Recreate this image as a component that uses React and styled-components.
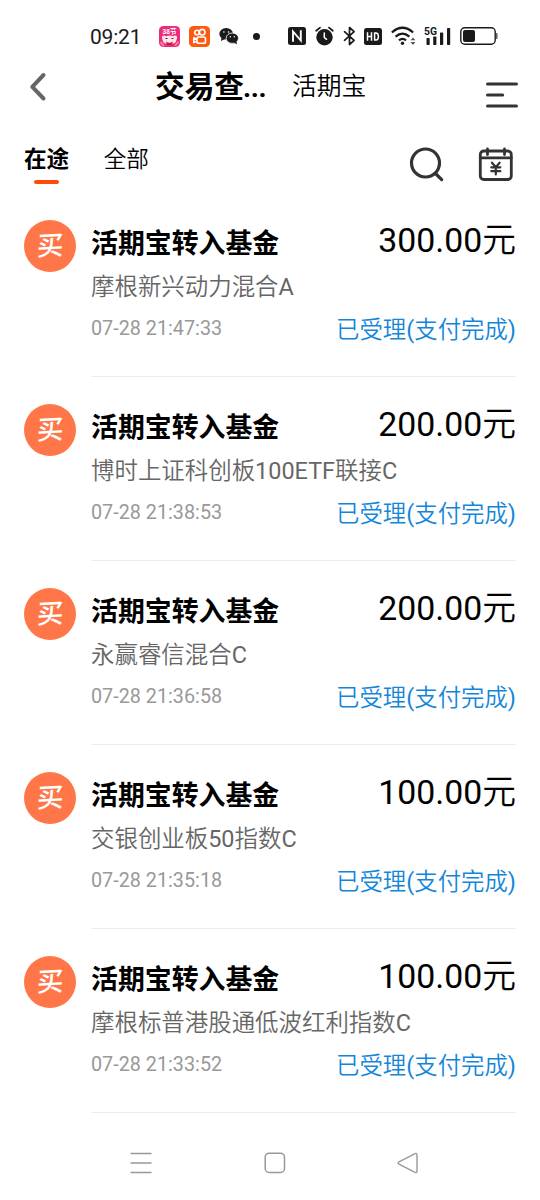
import styled, { createGlobalStyle } from "styled-components";

const GlobalStyle = createGlobalStyle`
    * {
        box-sizing: border-box;
    }

    body {
        margin: 0;
        background: #fff;
        font-family: Roboto, "Noto Sans CJK SC", sans-serif;
        color: #000;
    }

    svg {
        display: block;
        flex-shrink: 0;
        overflow: visible;
    }
`;

const Screen = styled.div`
    width: 540px;
    height: 1200px;
    display: flex;
    flex-direction: column;
    overflow: hidden;
`;

const StatusBar = styled.div`
    height: 60px;
    padding: 12px 42px 0 90px;
    display: flex;
    align-items: center;
    justify-content: space-between;
    color: #1a1a1a;
`;

const StatusGroup = styled.div`
    display: flex;
    align-items: center;
    gap: ${props => props.$gap}px;
`;

const Clock = styled.span`
    width: 60px;
    padding-top: 2px;
    font-size: 21px;
    line-height: 26px;
    letter-spacing: -0.2px;
    white-space: nowrap;
`;

const Dot = styled.span`
    width: 7px;
    height: 7px;
    margin-left: 5px;
    border-radius: 50%;
    background: #1a1a1a;
`;

const Header = styled.header`
    height: 64px;
    padding: 0 22px 0 29px;
    display: flex;
    align-items: flex-start;

    .back {
        margin-top: 12px;
    }

    .menu {
        margin: 20px 0 0 auto;
    }
`;

const PageTitle = styled.h1`
    width: 113px;
    margin: 5px 0 0 108px;
    font-size: 29.7px;
    line-height: 44px;
    font-weight: 700;
    white-space: nowrap;

    span {
        margin-left: -1px;
        font-size: 28px;
        letter-spacing: -0.4px;
    }
`;

const Account = styled.span`
    margin: 9px 0 0 24px;
    font-size: 24.8px;
    line-height: 36px;
    font-weight: 350;
`;

const Toolbar = styled.div`
    height: 69px;
    padding: 0 27px 0 24px;
    display: flex;
    align-items: flex-start;

    .search {
        margin: 23px 34px 0 auto;
    }

    .calendar {
        margin-top: 22px;
    }
`;

const Tab = styled.div`
    margin: 19px 34.5px 0 0;
    display: flex;
    flex-direction: column;
    align-items: center;
    font-size: 22.6px;
    line-height: 34px;
    font-weight: ${props => props.$active ? 700 : 350};

    &::after {
        content: "";
        width: 25px;
        height: 4px;
        margin-top: 3px;
        border-radius: 2px;
        background: ${props => props.$active ? "#ff4a0a" : "transparent"};
    }
`;

const List = styled.div`
    flex: 1;
`;

const Row = styled.div`
    height: 184px;
    padding: 27px 24px 0;
    display: flex;
    gap: 15px;
`;

const Badge = styled.div`
    width: 52px;
    height: 52px;
    border-radius: 50%;
    display: flex;
    align-items: center;
    justify-content: center;
    flex-shrink: 0;
    background: #ff7748;
    color: #fff;

    span {
        font-size: 26.5px;
        line-height: 52px;
        font-weight: 500;
        transform: skewX(-4deg) rotate(-3deg);
    }
`;

const Details = styled.div`
    flex: 1;
    display: flex;
    flex-direction: column;
    border-bottom: 1px solid #ededed;
`;

const Line = styled.div`
    display: flex;
    align-items: center;
    justify-content: space-between;
    height: ${props => props.$height}px;
    white-space: nowrap;
`;

const Kind = styled.span`
    margin-top: 2px;
    font-size: 26.9px;
    line-height: 40px;
    font-weight: 700;
`;

// Chinese is set a little lighter than the latin letters and digits
const Mixed = styled.span`
    font-weight: 350;

    i {
        font-style: normal;
        font-weight: 400;
    }
`;

const Amount = styled(Mixed)`
    margin-top: -5px;
    font-size: 33.8px;
    line-height: 44px;
`;

const Fund = styled(Mixed)`
    font-size: 23.45px;
    line-height: 36px;
    color: #666;
`;

const Time = styled.span`
    font-size: 19.8px;
    line-height: 30px;
    color: #999;
`;

const Status = styled(Mixed)`
    margin-top: 1px;
    font-size: 23.4px;
    line-height: 36px;
    color: #1486d9;
`;

const NavBar = styled.nav`
    height: 87px;
    padding: 12px 121px 0 130px;
    display: flex;
    align-items: center;
    justify-content: space-between;
    color: #999;
`;

const orders = [
    { fund: "摩根新兴动力混合A", time: "07-28 21:47:33", amount: "300.00元" },
    { fund: "博时上证科创板100ETF联接C", time: "07-28 21:38:53", amount: "200.00元" },
    { fund: "永赢睿信混合C", time: "07-28 21:36:58", amount: "200.00元" },
    { fund: "交银创业板50指数C", time: "07-28 21:35:18", amount: "100.00元" },
    { fund: "摩根标普港股通低波红利指数C", time: "07-28 21:33:52", amount: "100.00元" },
];

// wraps the latin runs of a text
const mix = text => text.split(/([\x20-\x7e]+)/).map((part, i) => (
    i % 2 ? <i key={i}>{part}</i> : part
));

const ShopIcon = () => (
    <svg width="21" height="21" viewBox="0 0 21 21">
        <rect width="21" height="21" rx="4.5" fill="#ee2a7b" />
        <path d="M3 12.5q-.5-3 2-3l2 .8q3.5-1.6 7 0l2-.8q2.5 0 2 3l-1.5 4q-6 4-12 0z" fill="#fbe6e8" />
        <path d="M7 15.5q3.5 2.4 7 0l-.8 3.5H7.8z" fill="#c9184a" />
        <path d="M6.5 12.5h2M12.5 12.5h2" stroke="#6b1730" strokeWidth="1.2" />
        <path d="M1.5 16l3.5 4M19.5 15.5L16 20" stroke="#ff7c9c" strokeWidth="2" />
        <text x="10.5" y="8" textAnchor="middle" fontSize="6.5" fontWeight="700" fill="#fff">38节</text>
    </svg>
);

const VideoIcon = () => (
    <svg width="21" height="21" viewBox="0 0 21 21" fill="none" stroke="#fff" strokeWidth="1.6">
        <rect width="21" height="21" rx="4.5" fill="#fb5a10" stroke="none" />
        <circle cx="8" cy="6.5" r="2.3" />
        <circle cx="13.2" cy="6.2" r="2.8" />
        <rect x="8" y="11" width="8.5" height="6.3" rx="1.8" />
        <path d="M8 13.2l-3.2-1.4v4.8L8 15.2" strokeLinejoin="round" />
    </svg>
);

const WechatIcon = () => (
    <svg width="20" height="18" viewBox="0 0 20 18" fill="#1a1a1a">
        <ellipse cx="7.2" cy="6.8" rx="6.9" ry="5.8" />
        <path d="M2.5 10.5L2 14l3.5-1.7z" />
        <ellipse cx="13.3" cy="11.2" rx="6.2" ry="5.2" stroke="#fff" strokeWidth=".8" />
        <path d="M15 15.8l3 1.5-.6-3z" />
        <circle cx="4.9" cy="5" r=".8" fill="#fff" />
        <circle cx="9.5" cy="5" r=".8" fill="#fff" />
        <circle cx="11.3" cy="9.8" r=".7" fill="#fff" />
        <circle cx="15.3" cy="9.8" r=".7" fill="#fff" />
    </svg>
);

const NfcIcon = () => (
    <svg width="18" height="18" viewBox="0 0 18 18">
        <rect width="18" height="18" rx="2.5" fill="#1a1a1a" />
        <path d="M5 14.8V4.5l7.8 9V3.2" fill="none" stroke="#fff" strokeWidth="1.9" />
    </svg>
);

const AlarmIcon = () => (
    <svg width="19" height="20" viewBox="0 0 19 20" fill="none" strokeLinecap="round">
        <circle cx="9.5" cy="11.2" r="8.2" fill="#1a1a1a" />
        <path d="M1.2 4.7L5 1.6M17.8 4.7L14 1.6" stroke="#1a1a1a" strokeWidth="1.8" />
        <path d="M9.3 7v4.5l2.2 1.8" stroke="#fff" strokeWidth="1.5" />
    </svg>
);

const BluetoothIcon = () => (
    <svg width="13" height="20" viewBox="0 0 13 20" fill="none" stroke="#1a1a1a" strokeWidth="1.7" strokeLinejoin="round" strokeLinecap="round">
        <path d="M1.5 5.7l9.6 8.7L6.5 18.5v-17l4.6 4.1-9.6 8.7" />
    </svg>
);

const HdIcon = () => (
    <svg width="18" height="17" viewBox="0 0 18 17">
        <rect width="18" height="17" rx="2.5" fill="#1a1a1a" />
        <path d="M3.5 4.3v8.4M7.5 4.3v8.4M3.5 8.5h4M10.6 5v7h1.3q2.5 0 2.5-3.5T11.9 5z" fill="none" stroke="#fff" strokeWidth="1.5" />
    </svg>
);

const WifiIcon = () => (
    <svg width="25" height="20" viewBox="0 0 25 20" fill="none" stroke="#1a1a1a" strokeWidth="2.3">
        <path d="M.9 6.5q10.6-9.4 21.2 0M4.6 10.6q6.9-6 13.8 0M8 14.3q3.5-2.9 7 0" />
        <circle cx="11.5" cy="17.3" r="1.7" fill="#1a1a1a" stroke="none" />
        <path d="M19.6 14.3l2.4-2.9 2.4 2.9zM19.6 16l2.4 2.9 2.4-2.9z" fill="#555" stroke="none" />
    </svg>
);

const SignalIcon = () => (
    <svg width="27" height="20" viewBox="0 0 27 20" fill="#1a1a1a">
        <text x="0" y="8.8" fontSize="11.5" fontWeight="700" textLength="13" lengthAdjust="spacingAndGlyphs">5G</text>
        <rect x="2.5" y="12" width="3.2" height="7" rx=".7" />
        <rect x="9.2" y="10.5" width="3.2" height="8.5" rx=".7" />
        <rect x="16" y="6.5" width="3.2" height="12.5" rx=".7" />
        <rect x="23" y="2" width="3.2" height="17" rx=".7" />
    </svg>
);

const BatteryIcon = () => (
    <svg width="38" height="18" viewBox="0 0 38 18">
        <rect x=".8" y=".8" width="34.4" height="16.4" rx="4" fill="none" stroke="#1a1a1a" strokeWidth="1.4" />
        <rect x="3" y="3" width="12" height="12" rx="2" fill="#1a1a1a" />
        <path d="M36 6h.6q1 0 1 1v4q0 1-1 1H36z" fill="#666" />
    </svg>
);

const BackIcon = () => (
    <svg className="back" width="18" height="30" viewBox="0 0 18 30" fill="none" stroke="#666" strokeWidth="4" strokeLinecap="round" strokeLinejoin="round">
        <path d="M14.5 3L3.3 14.8l11.2 11.7" />
    </svg>
);

const MenuIcon = () => (
    <svg className="menu" width="32" height="30" viewBox="0 0 32 30" stroke="#333" strokeWidth="3.2" strokeLinecap="round">
        <path d="M1.6 4h28.8M1.6 15h15M1.6 26h28.8" />
    </svg>
);

const SearchIcon = () => (
    <svg className="search" width="35" height="36" viewBox="0 0 35 36" fill="none" stroke="#333" strokeWidth="3.2" strokeLinecap="round">
        <circle cx="16.5" cy="16" r="14" />
        <path d="M26.5 26.5l6.2 6.2" />
    </svg>
);

const CalendarIcon = () => (
    <svg className="calendar" width="35" height="36" viewBox="0 0 35 36" fill="none" stroke="#333" strokeWidth="2.8" strokeLinecap="round">
        <rect x="2.3" y="5" width="31" height="28.5" rx="3.5" />
        <path d="M2.3 11.8h31M9.5 3v5.5M26.5 3v5.5" />
        <path d="M14 16.7l3.8 4.5 3.8-4.5M17.8 21v7.5M13.3 21.3h9M13.3 25.2h9" strokeWidth="2.2" />
    </svg>
);

const Order = ({ fund, time, amount }) => (
    <Row>
        <Badge><span>买</span></Badge>
        <Details>
            <Line $height={46}>
                <Kind>活期宝转入基金</Kind>
                <Amount>{mix(amount)}</Amount>
            </Line>
            <Line $height={42}>
                <Fund>{mix(fund)}</Fund>
            </Line>
            <Line $height={42}>
                <Time>{time}</Time>
                <Status>{mix("已受理(支付完成)")}</Status>
            </Line>
        </Details>
    </Row>
);

const App = () => {
    return (
        <Screen>
            <GlobalStyle />
            <StatusBar>
                <StatusGroup $gap={9}>
                    <Clock>09:21</Clock>
                    <ShopIcon />
                    <VideoIcon />
                    <WechatIcon />
                    <Dot />
                </StatusGroup>
                <StatusGroup $gap={8.6}>
                    <NfcIcon />
                    <AlarmIcon />
                    <BluetoothIcon />
                    <HdIcon />
                    <WifiIcon />
                    <SignalIcon />
                    <BatteryIcon />
                </StatusGroup>
            </StatusBar>

            <Header>
                <BackIcon />
                <PageTitle>交易查<span>...</span></PageTitle>
                <Account>活期宝</Account>
                <MenuIcon />
            </Header>

            <Toolbar>
                <Tab $active>在途</Tab>
                <Tab>全部</Tab>
                <SearchIcon />
                <CalendarIcon />
            </Toolbar>

            <List>
                {orders.map(order => <Order key={order.time} {...order} />)}
            </List>

            <NavBar>
                <svg width="22" height="22" viewBox="0 0 22 22" stroke="currentColor" strokeWidth="1.6">
                    <path d="M.5 1.5h21M.5 11h21M.5 20.5h21" />
                </svg>
                <svg width="22" height="22" viewBox="0 0 22 22" fill="none" stroke="currentColor" strokeWidth="1.5">
                    <rect x="1.2" y="1.2" width="19.3" height="19.3" rx="4" />
                </svg>
                <svg width="22" height="22" viewBox="0 0 22 22" fill="none" stroke="currentColor" strokeWidth="1.4">
                    <path d="M2 9.8L18 1.6q2-.8 2 1.2v16.4q0 2-2 1.2L2 12.2q-1.8-1.2 0-2.4z" />
                </svg>
            </NavBar>
        </Screen>
    );
};

export default App;
